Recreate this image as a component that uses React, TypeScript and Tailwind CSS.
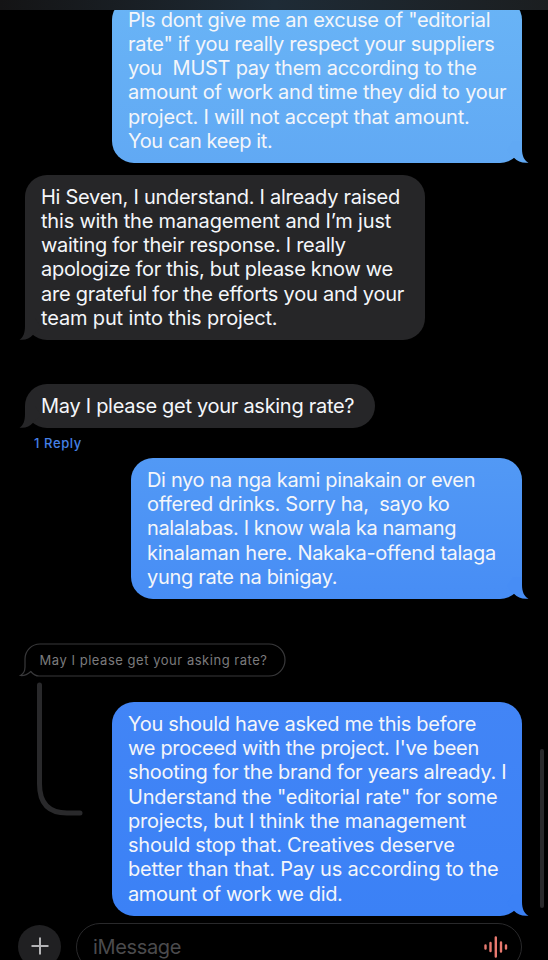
import type { ReactNode } from "react";

type BubbleProps = {
  lines: { text: string; spacing: string }[];
  className: string;
  tail: ReactNode;
};

const OutgoingTail = ({ color }: { color: string }) => (
  <svg
    className="absolute -right-[7px] bottom-0"
    width="22"
    height="22"
    viewBox="0 0 22 22"
    fill={color}
  >
    <path d="M15 0V8C15 14.5 17 19.5 21.5 21.6C15.5 22.4 10.5 20.4 7.2 16.9L0 9L6 0Z" />
  </svg>
);

const IncomingTail = () => (
  <svg
    className="absolute -left-[6px] bottom-0"
    width="22"
    height="22"
    viewBox="0 0 22 22"
    fill="#262628"
  >
    <path d="M6 0V8C6 14.5 4.5 19.5 .5 21.6C6.5 22.4 10.5 20.4 13.8 16.9L22 9L16 0Z" />
  </svg>
);

const Bubble = ({ lines, className, tail }: BubbleProps) => (
  <div
    className={`relative shrink-0 rounded-[22px] py-[10px] pl-4 text-[20px] leading-[24.25px] whitespace-pre ${className}`}
  >
    {tail}
    {lines.map((line) => (
      <p key={line.text} className={`relative ${line.spacing}`}>
        {line.text}
      </p>
    ))}
  </div>
);

const Voice = () => (
  <svg
    width="24"
    height="22"
    viewBox="0 0 24 22"
    stroke="#e8796f"
    strokeWidth="2.4"
    strokeLinecap="round"
  >
    <path d="M1.5 9.5V12.5M6.5 7V15M11.8 1.5V20.5M17 6.5V15.5M22 9.5V12.5" />
  </svg>
);

const App = () => {
  return (
    <div className="relative flex h-[960px] w-[548px] flex-col overflow-hidden bg-black font-['Inter','Liberation_Sans',sans-serif] text-[#f4f6fa]">
      <div className="z-10 h-[10px] shrink-0 bg-linear-to-r from-[#141415] via-[#1e2b36] to-[#1b1e20]" />

      <Bubble
        className="-mt-[12.5px] ml-[112px] w-[410px] bg-linear-to-b from-[#69b4f6] to-[#61a9f4]"
        tail={<OutgoingTail color="#61a9f4" />}
        lines={[
          { text: 'Pls dont give me an excuse of "editorial', spacing: "tracking-[-0.28px]" },
          { text: 'rate" if you really respect your suppliers', spacing: "tracking-[-0.26px]" },
          { text: "you  MUST pay them according to the", spacing: "tracking-[-0.26px]" },
          { text: "amount of work and time they did to your", spacing: "tracking-[-0.26px]" },
          { text: "project. I will not accept that amount.", spacing: "tracking-[-0.2px]" },
          { text: "You can keep it.", spacing: "tracking-[-0.4px]" },
        ]}
      />

      <Bubble
        className="mt-[11.5px] ml-[25px] w-[400px] bg-[#262628]"
        tail={<IncomingTail />}
        lines={[
          { text: "Hi Seven, I understand. I already raised", spacing: "tracking-[-0.27px]" },
          { text: "this with the management and I’m just", spacing: "tracking-[-0.19px]" },
          { text: "waiting for their response. I really", spacing: "tracking-[-0.28px]" },
          { text: "apologize for this, but please know we", spacing: "tracking-[-0.29px]" },
          { text: "are grateful for the efforts you and your", spacing: "tracking-[-0.24px]" },
          { text: "team put into this project.", spacing: "tracking-[-0.15px]" },
        ]}
      />

      <Bubble
        className="mt-[43.5px] ml-[25px] w-[350px] bg-[#262628]"
        tail={<IncomingTail />}
        lines={[{ text: "May I please get your asking rate?", spacing: "tracking-[-0.29px]" }]}
      />
      <p className="mt-[6px] ml-[34px] h-[24px] shrink-0 text-[13px] leading-[18px] font-medium tracking-[0.6px] text-[#4580e6]">
        1 Reply
      </p>

      <Bubble
        className="ml-[131px] w-[391px] bg-linear-to-b from-[#5299f5] to-[#478df5]"
        tail={<OutgoingTail color="#478df5" />}
        lines={[
          { text: "Di nyo na nga kami pinakain or even", spacing: "tracking-[-0.34px]" },
          { text: "offered drinks. Sorry ha,  sayo ko", spacing: "tracking-[-0.32px]" },
          { text: "nalalabas. I know wala ka namang", spacing: "tracking-[-0.38px]" },
          { text: "kinalaman here. Nakaka-offend talaga", spacing: "tracking-[-0.28px]" },
          { text: "yung rate na binigay.", spacing: "tracking-[-0.32px]" },
        ]}
      />

      <div className="relative mt-[43.75px] ml-[19px] h-[36px] w-[268px] shrink-0">
        <svg
          className="absolute inset-0"
          width="268"
          height="36"
          viewBox="0 0 268 36"
          fill="none"
          stroke="#39393b"
          strokeWidth="1.2"
        >
          <path d="M21 1H250A16 16 0 0 1 250 33H20C16 33 13.5 30.5 11.8 28.5C8.5 31.5 5 32.8 1.5 32.5C5 30.5 6 28 6 24V16A15 15 0 0 1 21 1Z" />
        </svg>
        <p className="relative pl-[20.5px] text-[13px] leading-[34px] tracking-[0.53px] whitespace-pre text-[#7b7b7d]">
          May I please get your asking rate?
        </p>
      </div>

      <div className="flex shrink-0">
        <svg
          className="mt-[2px] ml-[36px] shrink-0"
          width="76"
          height="140"
          viewBox="0 0 76 140"
          fill="none"
          stroke="#29292b"
          strokeWidth="5"
          strokeLinecap="round"
        >
          <path d="M3.5 4V103Q3.5 132 31 132H44" />
        </svg>
        <Bubble
          className="mt-[23px] w-[410px] bg-linear-to-b from-[#4285f6] to-[#3b81f6]"
          tail={<OutgoingTail color="#3b81f6" />}
          lines={[
            { text: "You should have asked me this before", spacing: "tracking-[-0.3px]" },
            { text: "we proceed with the project. I've been", spacing: "tracking-[-0.3px]" },
            { text: "shooting for the brand for years already. I", spacing: "tracking-[-0.3px]" },
            { text: 'Understand the "editorial rate" for some', spacing: "tracking-[-0.2px]" },
            { text: "projects, but I think the management", spacing: "tracking-[-0.21px]" },
            { text: "should stop that. Creatives deserve", spacing: "tracking-[-0.23px]" },
            { text: "better than that. Pay us according to the", spacing: "tracking-[-0.19px]" },
            { text: "amount of work we did.", spacing: "tracking-[-0.36px]" },
          ]}
        />
      </div>

      <div className="mt-[7px] flex shrink-0 pl-[18px]">
        <div className="mt-[2px] flex size-[43px] items-center justify-center rounded-full bg-[#202022]">
          <svg width="18" height="18" viewBox="0 0 18 18" stroke="#b4b4b6" strokeWidth="2">
            <path d="M9 .5V17.5M.5 9H17.5" />
          </svg>
        </div>
        <div className="ml-[15px] flex h-[48px] w-[446px] items-center justify-between rounded-full border border-[#29292b] pr-[13px] pl-4">
          <span className="text-[20px] tracking-[-0.35px] text-[#4b4b4d]">iMessage</span>
          <Voice />
        </div>
      </div>

      {/* scroll indicator */}
      <div className="absolute top-[749px] left-[540px] h-[159px] w-1 rounded-full bg-[#29292b]" />
    </div>
  );
};

export default App;
